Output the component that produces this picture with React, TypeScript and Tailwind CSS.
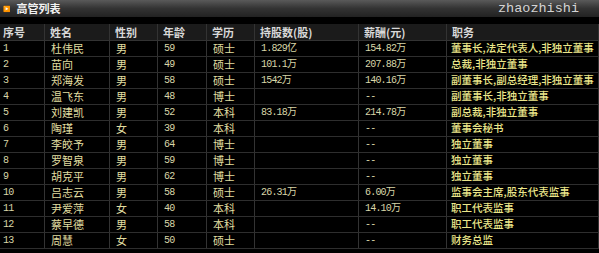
const rows = [
  ["1", "杜伟民", "男", "59", "硕士", "1.829亿", "154.82万", "董事长,法定代表人,非独立董事"],
  ["2", "苗向", "男", "49", "硕士", "101.1万", "207.88万", "总裁,非独立董事"],
  ["3", "郑海发", "男", "58", "硕士", "1542万", "140.16万", "副董事长,副总经理,非独立董事"],
  ["4", "温飞东", "男", "48", "博士", "", "--", "副董事长,非独立董事"],
  ["5", "刘建凯", "男", "52", "本科", "83.18万", "214.78万", "副总裁,非独立董事"],
  ["6", "陶瑾", "女", "39", "本科", "", "--", "董事会秘书"],
  ["7", "李皎予", "男", "64", "博士", "", "--", "独立董事"],
  ["8", "罗智泉", "男", "59", "博士", "", "--", "独立董事"],
  ["9", "胡克平", "男", "62", "博士", "", "--", "独立董事"],
  ["10", "吕志云", "男", "58", "硕士", "26.31万", "6.00万", "监事会主席,股东代表监事"],
  ["11", "尹爱萍", "女", "40", "本科", "", "14.10万", "职工代表监事"],
  ["12", "蔡早德", "男", "58", "本科", "", "--", "职工代表监事"],
  ["13", "周慧", "女", "50", "硕士", "", "--", "财务总监"],
];

const heads = ["序号", "姓名", "性别", "年龄", "学历", "持股数(股)", "薪酬(元)", "职务"];

const grid = "grid grid-cols-[45px_65px_48px_49px_48px_104px_88px_1fr]";
const cjk = "font-['Noto_Sans_CJK_SC',sans-serif] text-[11px]";
const mono = "font-['Liberation_Mono','Noto_Sans_CJK_SC',monospace] text-[10px] tracking-[-0.8px]";

export default function App() {
  return (
    <div className="w-[599px] h-[253px] overflow-hidden bg-black">
      {/* title bar */}
      <div className="h-[17px] flex items-center justify-between bg-gradient-to-b from-[#5a5a5a] via-[#333] to-[#222] pl-[3px] pr-[20px]">
        <div className="flex items-center gap-[6px]">
          <span className="text-[6px] text-[#e8e8e8] leading-none">▶</span>
          <span className={`${cjk} font-bold text-[#f2f2f2] leading-none`}>高管列表</span>
        </div>
        <span className="font-['Liberation_Mono',monospace] text-[13.5px] text-[#d4d4d4] leading-none">zhaozhishi</span>
      </div>

      <div className="mt-[7px]">
        <div className={`${grid} h-[17px] bg-[#1b1b1b] border-b border-[#333]`}>
          {heads.map((h, i) => (
            <div
              key={h}
              className={`${cjk} font-bold text-[#d8d8d8] flex items-center border-r border-[#333] leading-none whitespace-nowrap ${i === 0 ? "px-[3px]" : "px-[5px]"}`}
            >
              {h}
            </div>
          ))}
        </div>
        {rows.map((r) => (
          <div key={r[0]} className={`${grid} h-[16px] border-b border-[#2e2e2e]`}>
            {r.map((c, i) => {
              const isNum = i === 0 || i === 3 || i === 5 || i === 6;
              const font = isNum
                ? mono
                : i === 7
                  ? "font-['Noto_Sans_CJK_SC',sans-serif] text-[10.5px] font-medium text-[#ebe68a]"
                  : cjk;
              const color = i === 7 ? "" : i === 1 || i === 2 || i === 4 ? "text-[#e0dea0]" : "text-[#d8d6a8]";
              return (
                <div
                  key={i}
                  className={`${font} ${color} flex items-center leading-none whitespace-nowrap border-r border-[#333] ${i === 0 ? "px-[3px]" : i === 7 ? "px-[4px]" : "px-[6px]"}`}
                >
                  {c}
                </div>
              );
            })}
          </div>
        ))}
      </div>
    </div>
  );
}
